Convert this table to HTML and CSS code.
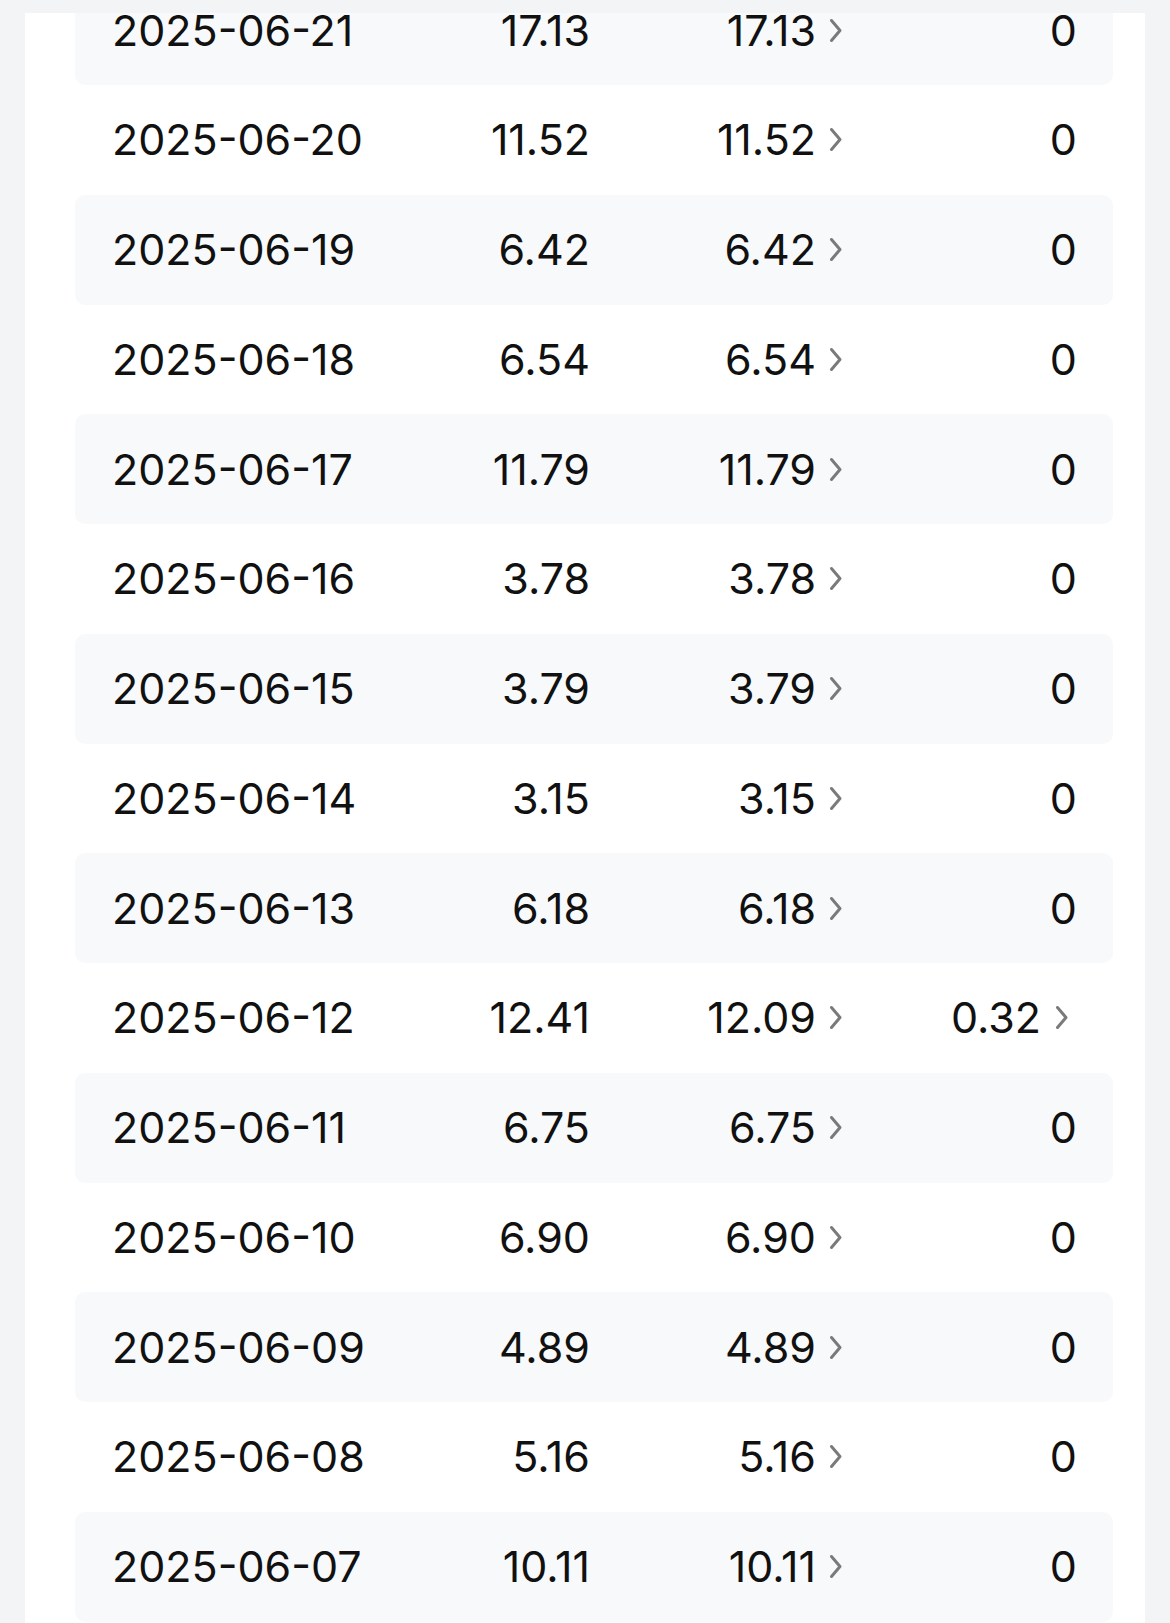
FILE: index.html
```html
<!DOCTYPE html>
<html lang="en">
<head>
<meta charset="utf-8">
<title>Daily records</title>
<link rel="stylesheet" href="styles.css">
</head>
<body>
<div class="topbar"></div>
<div class="viewport">
  <div class="card">
    <div class="row stripe"><span class="date">2025-06-21</span><span class="num">17.13</span><span class="num link">17.13<svg class="chev" viewBox="0 0 13 25"><path d="M2.5 2.5 L11 12.5 L2.5 22.5"/></svg></span><span class="num last">0</span></div>
    <div class="row"><span class="date">2025-06-20</span><span class="num">11.52</span><span class="num link">11.52<svg class="chev" viewBox="0 0 13 25"><path d="M2.5 2.5 L11 12.5 L2.5 22.5"/></svg></span><span class="num last">0</span></div>
    <div class="row stripe"><span class="date">2025-06-19</span><span class="num">6.42</span><span class="num link">6.42<svg class="chev" viewBox="0 0 13 25"><path d="M2.5 2.5 L11 12.5 L2.5 22.5"/></svg></span><span class="num last">0</span></div>
    <div class="row"><span class="date">2025-06-18</span><span class="num">6.54</span><span class="num link">6.54<svg class="chev" viewBox="0 0 13 25"><path d="M2.5 2.5 L11 12.5 L2.5 22.5"/></svg></span><span class="num last">0</span></div>
    <div class="row stripe"><span class="date">2025-06-17</span><span class="num">11.79</span><span class="num link">11.79<svg class="chev" viewBox="0 0 13 25"><path d="M2.5 2.5 L11 12.5 L2.5 22.5"/></svg></span><span class="num last">0</span></div>
    <div class="row"><span class="date">2025-06-16</span><span class="num">3.78</span><span class="num link">3.78<svg class="chev" viewBox="0 0 13 25"><path d="M2.5 2.5 L11 12.5 L2.5 22.5"/></svg></span><span class="num last">0</span></div>
    <div class="row stripe"><span class="date">2025-06-15</span><span class="num">3.79</span><span class="num link">3.79<svg class="chev" viewBox="0 0 13 25"><path d="M2.5 2.5 L11 12.5 L2.5 22.5"/></svg></span><span class="num last">0</span></div>
    <div class="row"><span class="date">2025-06-14</span><span class="num">3.15</span><span class="num link">3.15<svg class="chev" viewBox="0 0 13 25"><path d="M2.5 2.5 L11 12.5 L2.5 22.5"/></svg></span><span class="num last">0</span></div>
    <div class="row stripe"><span class="date">2025-06-13</span><span class="num">6.18</span><span class="num link">6.18<svg class="chev" viewBox="0 0 13 25"><path d="M2.5 2.5 L11 12.5 L2.5 22.5"/></svg></span><span class="num last">0</span></div>
    <div class="row"><span class="date">2025-06-12</span><span class="num">12.41</span><span class="num link">12.09<svg class="chev" viewBox="0 0 13 25"><path d="M2.5 2.5 L11 12.5 L2.5 22.5"/></svg></span><span class="num last link">0.32<svg class="chev" viewBox="0 0 13 25"><path d="M2.5 2.5 L11 12.5 L2.5 22.5"/></svg></span></div>
    <div class="row stripe"><span class="date">2025-06-11</span><span class="num">6.75</span><span class="num link">6.75<svg class="chev" viewBox="0 0 13 25"><path d="M2.5 2.5 L11 12.5 L2.5 22.5"/></svg></span><span class="num last">0</span></div>
    <div class="row"><span class="date">2025-06-10</span><span class="num">6.90</span><span class="num link">6.90<svg class="chev" viewBox="0 0 13 25"><path d="M2.5 2.5 L11 12.5 L2.5 22.5"/></svg></span><span class="num last">0</span></div>
    <div class="row stripe"><span class="date">2025-06-09</span><span class="num">4.89</span><span class="num link">4.89<svg class="chev" viewBox="0 0 13 25"><path d="M2.5 2.5 L11 12.5 L2.5 22.5"/></svg></span><span class="num last">0</span></div>
    <div class="row"><span class="date">2025-06-08</span><span class="num">5.16</span><span class="num link">5.16<svg class="chev" viewBox="0 0 13 25"><path d="M2.5 2.5 L11 12.5 L2.5 22.5"/></svg></span><span class="num last">0</span></div>
    <div class="row stripe"><span class="date">2025-06-07</span><span class="num">10.11</span><span class="num link">10.11<svg class="chev" viewBox="0 0 13 25"><path d="M2.5 2.5 L11 12.5 L2.5 22.5"/></svg></span><span class="num last">0</span></div>
  </div>
</div>
</body>
</html>
```

FILE: styles.css
```css
html, body {
  margin: 0;
  padding: 0;
  background: #f3f4f6;
}

body {
  font-family: Inter, "Noto Sans", "Liberation Sans", sans-serif;
  color: #111111;
}

.topbar {
  height: 13px;
  background: #f3f4f6;
}

.viewport {
  height: 1610px;
  overflow: hidden;
}

.card {
  width: 1120px;
  margin: -37.75px 0 0 25px;
  padding: 0 32px 40px 50px;
  box-sizing: border-box;
  background: #ffffff;
}

.row {
  height: 109.75px;
  display: grid;
  grid-template-columns: 248px 230px 252px 1fr;
  align-items: center;
  padding: 0 36px 0 37px;
  border-radius: 10px;
  font-size: 43px;
  letter-spacing: 0;
  line-height: 1;
  white-space: nowrap;
}

.stripe {
  background: #f8f9fb;
}

.date {
  justify-self: start;
}

.num {
  justify-self: end;
  display: flex;
  align-items: center;
}

.link .chev {
  width: 13px;
  height: 25px;
  margin-left: 13px;
}

.last.link .chev {
  margin-left: 14px;
  margin-right: 9px;
}

.chev path {
  fill: none;
  stroke: #7a7a7a;
  stroke-width: 3;
  stroke-linecap: round;
  stroke-linejoin: round;
}
```
